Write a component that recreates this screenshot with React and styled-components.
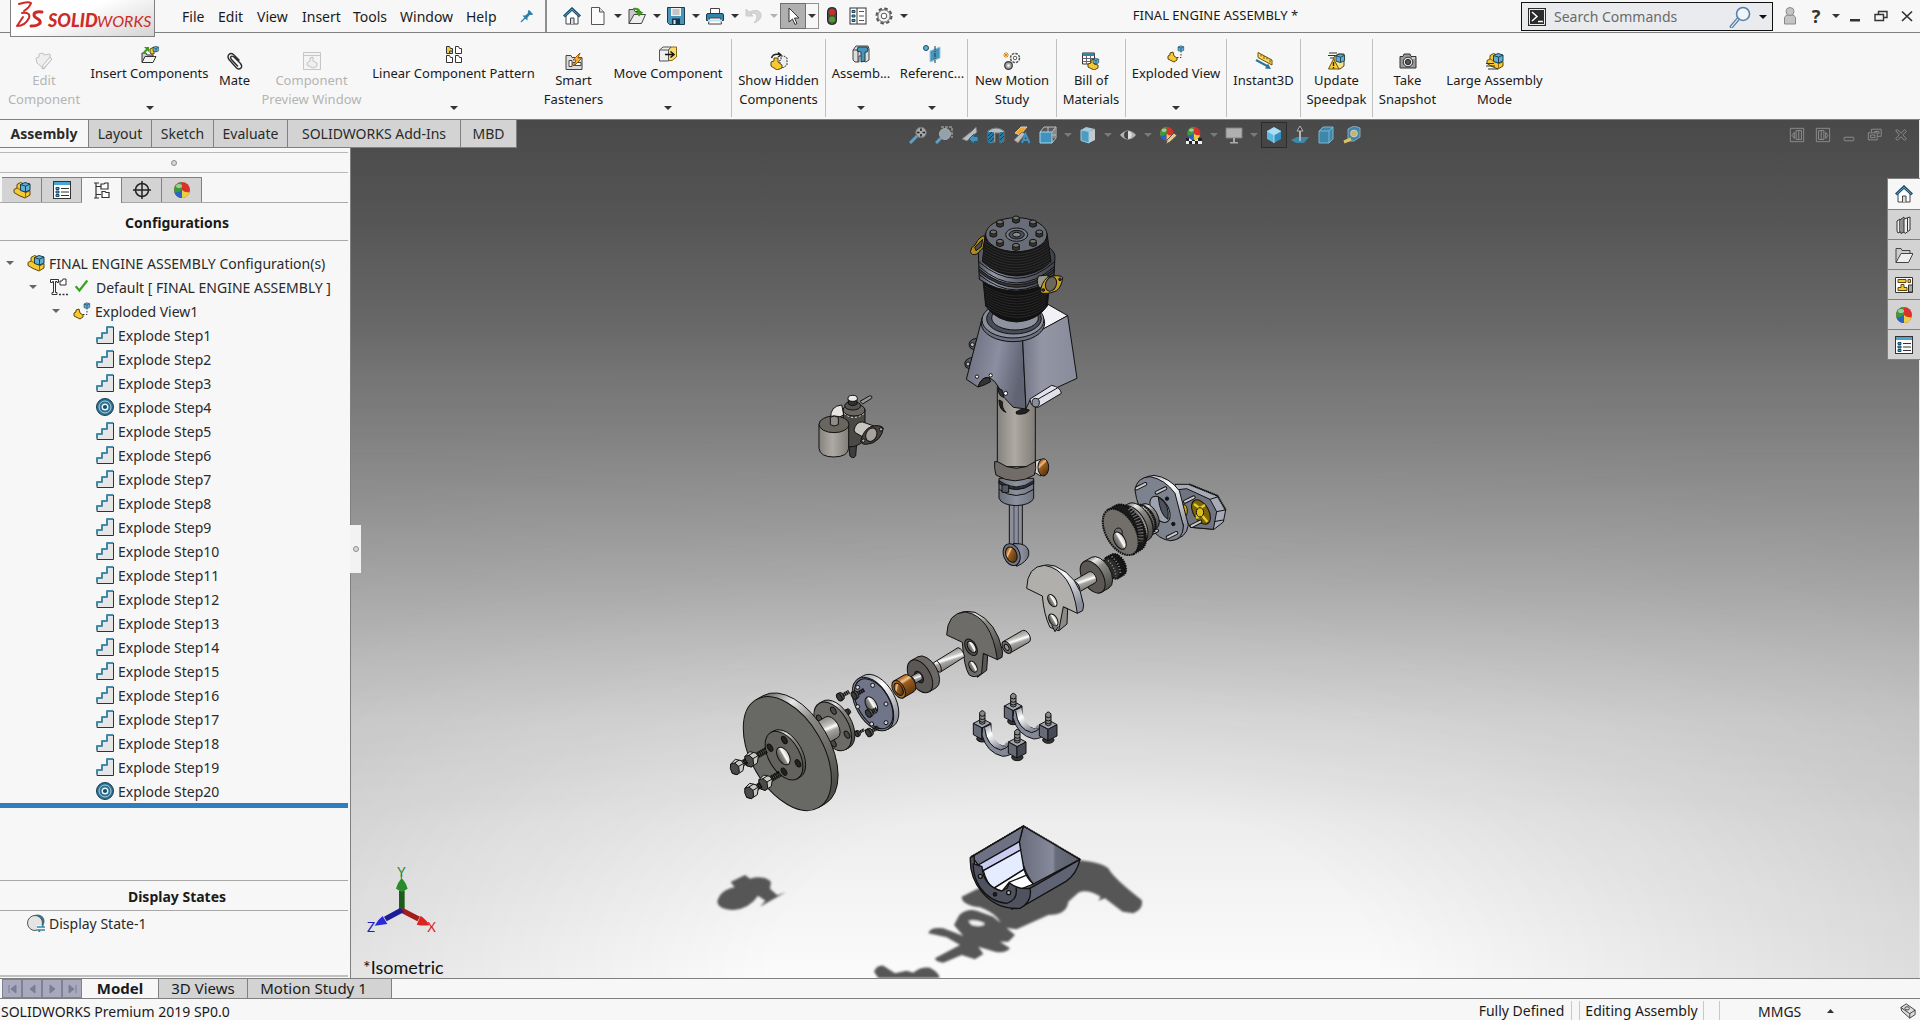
import { useState } from "react";
import styled, { createGlobalStyle, css } from "styled-components";

const GlobalStyle = createGlobalStyle`
  * {
    box-sizing: border-box;
  }
  body {
    margin: 0;
    background: #f7f7f7;
    color: #1a1a1a;
    font-family: "Segoe UI", "Noto Sans", "Open Sans", sans-serif;
    font-size: 14px;
    line-height: 19px;
  }
  button, input {
    font: inherit;
    color: inherit;
  }
  button {
    padding: 0;
    border: 0;
    background: transparent;
    cursor: pointer;
  }
`;

const flexCenter = css`
  display: flex;
  align-items: center;
  justify-content: center;
`;

const App = styled.div`
  min-height: 100vh;
  display: flex;
  flex-direction: column;
  overflow: hidden;
`;

/* ---------- title bar ---------- */

const TitleBar = styled.header`
  height: 33px;
  display: flex;
  align-items: stretch;
  border-bottom: 1px solid #808080;
`;

const Logo = styled.div`
  width: 145px;
  height: 37px;
  margin: 0 16px 0 10px;
  flex-shrink: 0;
  position: relative;
  border: 1px solid #808080;
  border-top: 0;
  background: linear-gradient(160deg, #fff 40%, #d4d4d4);
`;

const Menu = styled.nav`
  display: flex;
  align-items: center;
  padding-right: 5px;
  border-right: 2px solid #909090;
`;

const MenuItem = styled.button`
  width: ${(props) => props.$w}px;
  height: 28px;
  padding-left: 11px;
  text-align: left;
`;

const QuickBar = styled.div`
  display: flex;
  align-items: center;
  padding-left: 12px;
`;

const QuickButton = styled.button`
  ${flexCenter}
  width: ${(props) => props.$w || 26}px;
  height: 26px;
  opacity: ${(props) => (props.disabled ? 0.35 : 1)};
  ${(props) =>
    props.$pressed &&
    css`
      background: #b0b0b0;
      border: 1px solid #707070;
    `}
  ${(props) =>
    props.$boxed &&
    css`
      border: 1px solid #909090;
      border-left: 0;
    `}
`;

const HelpMark = styled.b`
  font-size: 18px;
  color: #333;
`;

const DocTitle = styled.div`
  flex: 1;
  ${flexCenter}
  padding-bottom: 2px;
  font-size: 13px;
`;

const Search = styled.label`
  width: 252px;
  height: 29px;
  margin-top: 2px;
  display: flex;
  align-items: center;
  gap: 8px;
  padding: 0 5px 0 6px;
  border: 1px solid #111;
  background: #e9ebee;
`;

const SearchInput = styled.input`
  flex: 1;
  min-width: 0;
  border: 0;
  padding: 0;
  background: transparent;
  outline: none;
  &::placeholder {
    color: #6a6a6a;
    opacity: 1;
  }
`;

const WindowButtons = styled.div`
  display: flex;
  align-items: center;
  padding-left: 4px;
`;

/* ---------- ribbon ---------- */

const Ribbon = styled.div`
  height: 87px;
  display: flex;
  padding-top: 6px;
  border-bottom: 1px solid #808080;
`;

const Command = styled.button`
  width: ${(props) => props.$w}px;
  height: 78px;
  flex-shrink: 0;
  display: flex;
  flex-direction: column;
  align-items: center;
  padding-top: ${(props) => (props.$menu ? 6 : 13)}px;
  border-right: 1px solid ${(props) => (props.$divider ? "#c0c0c0" : "transparent")};
  color: ${(props) => (props.disabled ? "#b4b4b4" : "#1a1a1a")};
  font-size: 13px;
  white-space: nowrap;
  svg {
    flex-shrink: 0;
    filter: ${(props) => (props.disabled ? "grayscale(1) opacity(0.3)" : "none")};
  }
`;

const CommandText = styled.span`
  margin-top: 1px;
  white-space: pre;
`;

const CommandArrow = styled.span`
  margin-top: 20px;
  line-height: 4px;
`;

/* ---------- workspace ---------- */

const Workspace = styled.main`
  flex: 1;
  display: grid;
  grid-template-columns: 351px 1fr;
  grid-template-rows: 28px 1fr;
`;

const Tabs = styled.div`
  grid-area: 1 / 1 / 2 / 3;
  z-index: 1;
  display: flex;
  justify-self: start;
`;

const Tab = styled.button`
  width: ${(props) => props.$w}px;
  border-right: 1px solid #808080;
  border-bottom: 1px solid #808080;
  background: ${(props) => (props.$active ? "#f7f7f7" : "#d3d3d3")};
  font-weight: ${(props) => (props.$active ? 700 : 400)};
  color: #2a2a2a;
`;

const Panel = styled.aside`
  grid-area: 2 / 1 / 3 / 2;
  display: flex;
  flex-direction: column;
  padding: 4px 2px 0 0;
  border-right: 1px solid #808080;
`;

const PanelGrip = styled.div`
  ${flexCenter}
  height: 21px;
  border: 1px solid #b8b8b8;
  border-width: 1px 0;
`;

const GripDot = styled.span`
  width: 6px;
  height: 6px;
  border: 1px solid #8c8c8c;
  border-radius: 50%;
  background: #d8d8d8;
`;

const PanelTabs = styled.div`
  height: 30px;
  display: flex;
  padding: 4px 0 0 2px;
  border-bottom: 1px solid #a8a8a8;
`;

const PanelTab = styled.button`
  ${flexCenter}
  width: 40px;
  height: ${(props) => (props.$active ? 26 : 25)}px;
  border-top: 1px solid #808080;
  border-right: 1px solid #808080;
  background: ${(props) => (props.$active ? "#f7f7f7" : "#d3d3d3")};
`;

const PanelHeading = styled.h2`
  ${flexCenter}
  height: ${(props) => props.$h}px;
  margin: 0;
  padding: 2px 0 0 6px;
  border-bottom: 1px solid #a8a8a8;
  font-size: 14px;
`;

const Tree = styled.ul`
  margin: 0;
  padding: 10px 0 0;
  list-style: none;
  border-bottom: 5px solid #2f7fbf;
`;

const TreeRow = styled.li`
  height: 24px;
  display: flex;
  align-items: center;
  padding-left: ${(props) => props.$level * 23}px;
  white-space: nowrap;
  color: #2a2a2a;
`;

const TreeArrow = styled.span`
  ${flexCenter}
  width: 20px;
  margin-right: 7px;
`;

const TreeText = styled.span`
  margin-left: ${(props) => props.$gap || 4}px;
`;

const Spacer = styled.div`
  flex: 1;
`;

const DisplayStates = styled.section`
  height: 98px;
  border-top: 1px solid #a8a8a8;
`;

const DisplayRow = styled.div`
  height: 66px;
  display: flex;
  align-items: flex-start;
  padding: 3px 0 0 27px;
  border-bottom: 2px solid #c0c0c0;
  color: #2a2a2a;
`;

const Viewport = styled.section`
  grid-area: 1 / 2 / 3 / 3;
  position: relative;
  border-right: 1px solid #e8e8e8;
  background: linear-gradient(
    #494949 0%,
    #565656 12%,
    #686868 24%,
    #7e7e7e 34%,
    #979797 44%,
    #b1b1b1 54%,
    #c8c8c8 62%,
    #dcdcdc 70%,
    #ededed 82%,
    #fbfbfb 100%
  );
  &::before {
    content: "";
    position: absolute;
    inset: 0;
    background: radial-gradient(ellipse 64% 70% at 46% 100%, transparent 30%, rgba(0, 0, 0, 0.17) 110%);
    mask-image: linear-gradient(transparent 30%, #000 80%);
  }
`;

const Scene = styled.svg`
  position: absolute;
  inset: 0;
  width: 100%;
  height: 100%;
`;

const ViewBar = styled.div`
  position: absolute;
  top: 2px;
  left: 0;
  right: 0;
  display: flex;
  justify-content: center;
`;

const ViewButton = styled.button`
  ${flexCenter}
  width: ${(props) => props.$w || 26}px;
  height: 26px;
  ${(props) =>
    props.$active &&
    css`
      border: 1px solid #2c2c2c;
      background: #454545;
    `}
`;

const ViewWindowBar = styled.div`
  position: absolute;
  top: 2px;
  right: 5px;
  display: flex;
`;

const TaskPane = styled.div`
  position: absolute;
  top: 58px;
  right: -1px;
  width: 33px;
  border: 1px solid #808080;
  border-right: 0;
`;

const TaskTab = styled.button`
  ${flexCenter}
  width: 32px;
  height: 30px;
  background: ${(props) => (props.$active ? "#f7f7f7" : "#d3d3d3")};
  & + & {
    border-top: 1px solid #808080;
  }
`;

const Splitter = styled.button`
  ${flexCenter}
  position: absolute;
  top: 405px;
  left: -1px;
  width: 11px;
  height: 48px;
  background: #f2f2f2;
`;

const ViewName = styled.div`
  position: absolute;
  left: 12px;
  bottom: 0;
  font-family: Lato, sans-serif;
  font-size: 18px;
  line-height: 22px;
  color: #111;
`;

/* ---------- bottom ---------- */

const SheetBar = styled.div`
  height: 21px;
  display: flex;
  padding-left: 2px;
  border-top: 1px solid #808080;
  border-bottom: 1px solid #808080;
`;

const SheetArrow = styled.button`
  ${flexCenter}
  width: 20px;
  border: 1px solid #80809a;
  background: #a9a9bd;
`;

const SheetTab = styled.button`
  width: ${(props) => props.$w}px;
  padding-right: ${(props) => props.$pad || 0}px;
  border-right: 1px solid #808080;
  background: ${(props) => (props.$active ? "#f7f7f7" : "#d3d3d3")};
  font-size: 15px;
  font-weight: ${(props) => (props.$active ? 700 : 400)};
`;

const StatusBar = styled.footer`
  height: 21px;
  display: flex;
  align-items: center;
  padding: 3px 4px 0 1px;
  overflow: hidden;
`;

const StatusCell = styled.span`
  width: ${(props) => props.$w}px;
  height: 21px;
  text-align: center;
  border-right: 1px solid #c8c8c8;
`;

const UnitButton = styled.button`
  width: 180px;
  display: flex;
  align-items: center;
  padding-left: 38px;
  gap: 26px;
`;

/* ---------- icons ---------- */

const Icon = ({ size = 18, children }) => (
  <svg width={size} height={size} viewBox="0 0 18 18" aria-hidden="true">
    {children}
  </svg>
);

const Caret = ({ color = "#333", up }) => (
  <svg width="8" height="4" viewBox="0 0 8 4" aria-hidden="true">
    <path d={up ? "M0 4h7l-3.500-4z" : "M0 0h8l-4 4z"} fill={color} />
  </svg>
);

const Cube = ({ x = 0, y = 0, s = 1 }) => (
  <g transform={`translate(${x} ${y}) scale(${s})`} stroke="#1c3d4f" strokeLinejoin="round">
    <path d="M0 2.500 4.500.5 9.500 2 9.500 8 5 10 0 8.500z" fill="#5fb0d8" />
    <path d="M0 2.500 5 4.200 9.500 2M5 4.200V10" fill="none" />
  </g>
);

const assembly = (
  <>
    <path
      d="M1 8.500 4 7V3.500L7.500 1.500 10 2.500 8 9 13 11.500 17 9.500V14L12 17 6 14.500 1 11.500z"
      fill="#f6c92f"
      stroke="#5b4510"
      strokeLinejoin="round"
    />
    <path d="M4 7 8 9M12.500 12V17" stroke="#8a6810" fill="none" />
    <Cube x={7.5} y={1} />
  </>
);

const ballPaint = (
  <>
    <circle cx="9" cy="9" r="8" fill="#d8322a" />
    <path d="M9 9 9 1A8 8 0 0 0 1.500 11.500Q6 13 9 9z" fill="#3a9b3c" />
    <path d="M9 9Q5 12 1.500 11.500A8 8 0 0 0 9 17z" fill="#2864c8" />
    <path d="M9 9V17A8 8 0 0 0 16.500 11Q12 12 9 9z" fill="#e9d040" />
    <ellipse cx="6" cy="5" rx="3" ry="2" fill="#fff" opacity=".5" />
  </>
);

const listPaint = (
  <>
    <rect x=".5" y=".5" width="17" height="17" fill="#fff" stroke="#333" />
    <rect x="1" y="1" width="16" height="3" fill="#4fa3cf" />
    <path d="M3 6.500h3v2H3zM3 10h3v2H3zM3 13.500h3v2H3z" fill="#4fa3cf" stroke="#1c4a66" />
    <path d="M8 7.500h8M8 11h8M8 14.500h8" stroke="#333" />
  </>
);

const homePaint = (
  <>
    <path d="M3 8v9h12V8L9 3z" fill="#fff" stroke="#444" />
    <path d="M7.500 17v-6h3.500v6" fill="#ddd" stroke="#444" />
    <path d="M1 9.500 9 2 17 9.500" fill="none" stroke="#1c4a66" strokeWidth="3" />
    <path d="M1.500 9.200 9 2.200 16.500 9.200" fill="none" stroke="#57a8cf" />
  </>
);

const explodedPaint = (
  <>
    <path d="M1 11 3 10V8L6 7 7 11 10 13V15L7 17 1 14z" fill="#f6c92f" stroke="#5b4510" strokeLinejoin="round" />
    <path d="M10 12.500h4V7" fill="none" stroke="#333" strokeDasharray="1.500 1.500" />
    <Cube x={11} y={0.5} s={0.6} />
  </>
);

const icons = {
  assembly,
  list: listPaint,
  home: homePaint,
  exploded: explodedPaint,
  ball: ballPaint,
  pin: <path d="M11 2 16 7 14 8 12 8 9.500 11 9.500 14 7 12 3 16 2 16 2 15 6 11 4 8.500 7 8.500 10 6 10 4z" fill="#2d7fa8" />,
  doc: (
    <>
      <path d="M2.500 .5h8l4.500 4.500v12.500h-12.500z" fill="#fbfbfb" stroke="#555" />
      <path d="M10.500 .5v4.500h4.500" fill="#ddd" stroke="#555" />
    </>
  ),
  open: (
    <>
      <path d="M1 16.500V2.500h5l1 2h6v3" fill="#c9c9c9" stroke="#444" />
      <path d="M1 16.500 6 7.500h11.500l-4 9z" fill="#eee" stroke="#444" />
      <path d="M5 1Q12 0 12.500 5h3L11 9.500 7.500 5H10Q9 2 5 3z" fill="#3f9b1f" />
    </>
  ),
  save: (
    <>
      <path d="M.5 .5h17v17H2.500l-2-2z" fill="#4a94ba" stroke="#1c3d4f" />
      <path d="M4 1h10v8H4z" fill="#f2f2f2" />
      <path d="M5.500 3h7M5.500 5h7M5.500 7h7" stroke="#999" />
      <path d="M5 11.500h8v6H5z" fill="#173648" />
      <path d="M6.500 13h2v4h-2z" fill="#dce9f0" />
    </>
  ),
  print: (
    <>
      <path d="M4.500 7V1.500h9V7" fill="#fff" stroke="#444" />
      <path d="M.5 8Q.5 6.500 2 6.500h14q1.500 0 1.500 1.500v5.500H.5z" fill="#2f86ad" stroke="#1c3d4f" />
      <path d="M3.500 11h11l1 6H2.500z" fill="#fff" stroke="#444" />
      <path d="M2 13.500h14" stroke="#bfe0ef" strokeWidth="2" />
    </>
  ),
  undo: <path d="M1 2v7h7L5.500 6.500Q12 5 12 10 12 13 9 16 17 13 16 7 14 1 4 5z" fill="#999" stroke="#777" />,
  cursor: <path d="M5 1v14l3.500-3 2.500 5.500 2-1-2.500-5.500h4.500z" fill="#fff" stroke="#333" />,
  traffic: (
    <>
      <rect x="4.500" y=".5" width="9" height="17" rx="4" fill="#4a4a4a" stroke="#222" />
      <circle cx="9" cy="5" r="3" fill="#d42b20" />
      <circle cx="9" cy="12.500" r="3" fill="#4f9d2b" />
    </>
  ),
  options: (
    <>
      <rect x="1" y="1" width="16" height="16" fill="#fff" stroke="#333" />
      <path d="M8 1v16" stroke="#333" />
      <path d="M3 3.500h3v2H3zM3 8h3v2H3zM3 12.500h3v2H3z" fill="#4fa3cf" stroke="#1c4a66" />
      <path d="M10 4.500h5M10 9h5M10 13.500h5" stroke="#555" />
    </>
  ),
  gear: (
    <g fill="none" stroke="#555">
      <circle cx="9" cy="9" r="7.500" strokeDasharray="3.500 2.400" strokeWidth="2" />
      <circle cx="9" cy="9" r="6.200" fill="#f3f3f3" />
      <circle cx="9" cy="9" r="2.800" fill="#fff" />
    </g>
  ),
  prompt: (
    <>
      <path d="M0 0h18v18H0z" fill="#2b2b2b" />
      <path d="M1.500 1.500h15v15h-15z" fill="none" stroke="#eee" />
      <path d="M4 4 9 8.500 4 13M10 13.500h5" fill="none" stroke="#fff" strokeWidth="1.500" />
    </>
  ),
  magnifier: (
    <>
      <path d="M2 17 8 10" stroke="#5b80a8" strokeWidth="3" strokeLinecap="round" />
      <path d="M2 17 8 10" stroke="#dfe8f2" strokeWidth="1" strokeLinecap="round" />
      <circle cx="11.500" cy="6.500" r="5.300" fill="#eef6fb" stroke="#5b80a8" strokeWidth="1.300" />
    </>
  ),
  user: (
    <g fill="#c4c4c4" stroke="#8a8a8a">
      <path d="M3.500 17V11q0-3 5.500-3t5.500 3v6z" />
      <circle cx="9" cy="4.500" r="4" />
    </g>
  ),
  minimize: <path d="M4 12h10v2.500H4z" fill="#333" />,
  restore: (
    <g fill="none" stroke="#333" strokeWidth="1.400">
      <path d="M3 7.500h8.500v6H3z" />
      <path d="M6.500 7V4.500H15v6h-3" />
    </g>
  ),
  close: <path d="M4 4.500 14 14M14 4.500 4 14" stroke="#333" strokeWidth="1.700" />,
  insert: (
    <>
      <path d="M1 17V8h4l1 2h6v7z" fill="#ccc" stroke="#333" />
      <path d="M1 17.500 4 11.500h11l-3 6z" fill="#f2f2f2" stroke="#333" />
      <path d="M2 7 5 4 3 2H8V7L6.500 5.500 3.500 8.500z" fill="#3a9b1f" />
      <path d="M9 7 9 4 13 2V9L10 9z" fill="#f6c92f" stroke="#5b4510" />
      <Cube x={12} y={1} s={0.6} />
    </>
  ),
  clip: (
    <path
      d="M13.500 8.500 7.500 2.500Q5 .5 3 2.500 1 4.500 3 7.500L10.500 16Q13 18 15 16 16.500 14 14.500 11.500L8 5Q6 3.500 5 4.500 4 5.500 5.500 7.500L12 14.500"
      fill="none"
      stroke="#2b2b2b"
      strokeWidth="1.400"
    />
  ),
  preview: (
    <>
      <path d="M.5 .5h17v17H.5z" fill="#eee" stroke="#555" />
      <path d="M.5 3.500h17" stroke="#555" />
      <path d="M4 11 7 9V6L10 5V9L14 11V14L10 16 4 13z" fill="#ddd" stroke="#444" />
    </>
  ),
  edit: (
    <>
      <path d="M1 6 4 5 4 2 8 1 9 3 15 2V9L9 17 2 11z" fill="#ddd" stroke="#444" />
      <path d="M7 17 8 13 15 5 17 7 10 15z" fill="#eee" stroke="#333" />
    </>
  ),
  pattern: (
    <>
      <path d="M1.500 1.500h3l1 2h2v5h-6z" fill="#f9cf3f" stroke="#333" />
      <path d="M10.500 1.500h3l1 2h2v5h-6zM1.500 10.500h3l1 2h2v5h-6zM10.500 10.500h3l1 2h2v5h-6z" fill="#fff" stroke="#333" />
      <path d="M4.500 8.500V6h3" fill="#5fb0d8" stroke="#1c4a66" />
    </>
  ),
  fasteners: (
    <>
      <path d="M1 17.500V3.500h5l1 2h10v12z" fill="#ddd" stroke="#444" />
      <path d="M4 8.500h3v6H4zM8 10.500h8v3H8z" fill="#fff" stroke="#444" />
      <path d="M15 1 8 8h3l-2 6 8-8h-4z" fill="#f9b52f" stroke="#a05a10" />
    </>
  ),
  move: (
    <>
      <path d="M9 5 12 2h5.500v10L13 15.500H9z" fill="#f9dc6f" stroke="#8a6810" />
      <path d="M.5 5 4 2h8L9.500 5v11H.500z" fill="#eee" stroke="#555" />
      <path d="M.500 5h9" stroke="#555" />
      <path d="M6 9.500h8M11.500 6.500 15 9.500 11.500 12.500" fill="none" stroke="#111" strokeWidth="1.500" />
    </>
  ),
  hidden: (
    <>
      <path d="M9 9 11 8V4L14 4 17 6V13L13 16z" fill="#eee" stroke="#333" strokeDasharray="2 1" />
      <path d="M1 10 4 9V6L8 6V10L12 13V16L7 18 1 14z" fill="#f6c92f" stroke="#5b4510" />
      <path d="M1.500 6Q3 1 10 2.500M8 .500 11 3 8 5" fill="none" stroke="#222" strokeWidth="1.500" />
    </>
  ),
  features: (
    <>
      <path d="M1 5 4 1h12l1 3v11l-3 2-3-1v-5H7v6H3l-2-2z" fill="#ddd" stroke="#444" />
      <path d="M1 5h5v12" fill="none" stroke="#444" />
      <path d="M6 2h9l1 3-1 2h-2v9l-4 1V7L5 6z" fill="#4795bb" stroke="#1c3d4f" />
    </>
  ),
  geometry: (
    <>
      <circle cx="3" cy="3" r="2.500" fill="#5fb0d8" stroke="#1c4a66" />
      <path d="M7 6 17 2V13L7 17z" fill="#4795bb" stroke="#9ccbe2" />
      <path d="M12 1v17" stroke="#173648" strokeDasharray="4 1 1 1" />
    </>
  ),
  motion: (
    <>
      <circle cx="12" cy="6" r="4.500" fill="#fff" stroke="#555" strokeWidth="1.500" strokeDasharray="2.500 1" />
      <circle cx="5.500" cy="13.500" r="3.800" fill="#aaa" stroke="#444" strokeWidth="1.400" />
      <circle cx="5.500" cy="13.500" r="1.200" fill="#fff" />
      <circle cx="12" cy="6" r="1.800" fill="#fff" stroke="#555" />
      <path d="M3 0v6M0 3h6M1 1l4 4M5 1 1 5" stroke="#e08a20" />
    </>
  ),
  bom: (
    <>
      <path d="M.5 1h12v11H.500z" fill="#fff" stroke="#333" />
      <path d="M.500 1h12v3H.500z" fill="#2f86ad" />
      <path d="M.500 6.500h12M.500 9.500h12M4.500 4v8M8.500 4v8" stroke="#666" />
      <path d="M6 12 9 11V8L12 7V12L16 13V16L12 18 6 15z" fill="#f6c92f" stroke="#5b4510" />
      <Cube x={11} y={6} s={0.6} />
    </>
  ),
  instant: (
    <>
      <path d="M3 .500 17 8V13L3 5.500z" fill="#fbd956" stroke="#6a5010" />
      <path d="M6 2.500v2M9 4v3M12 5.500v2M15 7.500v3" stroke="#6a5010" />
      <path d="M1 8 13 14.500" stroke="#2f7396" strokeWidth="2" />
      <path d="M16 17 10 16.500 13 11.500z" fill="#2f7396" />
    </>
  ),
  speedpak: (
    <>
      <path d="M1 1h8M0 3.500h8M2 6h6" stroke="#333" />
      <path d="M6 5 10 2H16V14L12 17 6 16z" fill="#f6e08f" stroke="#5b4510" />
      <Cube x={8} y={1.5} s={0.9} />
      <path d="M5.500 7 11 17H.500z" fill="#fbd02f" stroke="#6a5010" />
      <path d="M5.500 10v4M5.500 15v1.500" stroke="#222" strokeWidth="1.400" />
    </>
  ),
  camera: (
    <>
      <path d="M1 4.500h3l1-2.500h6l1 2.500h5v11.500H1z" fill="#9a9a9a" stroke="#333" />
      <circle cx="9" cy="10" r="4.800" fill="#ddd" stroke="#333" />
      <circle cx="9" cy="10" r="2.600" fill="#555" stroke="#222" />
      <path d="M13 6h3" stroke="#fff" />
    </>
  ),
  large: (
    <>
      {assembly}
      <path d="M0 11.500h8M0 14h9M2 17h10" stroke="#333" />
    </>
  ),
  config: (
    <g fill="#fff" stroke="#333" strokeWidth="1.200">
      <path d="M3 1v15M1 1h5M1 16h5M3 4.500h5M3 12.500h5" fill="none" />
      <path d="M8 2h3l1-1h3v6H8zM9 9.500h3l1 1h3v5H9z" />
    </g>
  ),
  target: (
    <g fill="none" stroke="#222" strokeWidth="1.500">
      <circle cx="9" cy="9" r="6.500" />
      <path d="M9 0v18M0 9h18" />
    </g>
  ),
  configTree: (
    <g stroke="#333" fill="#fff">
      <path d="M.500 1.500h8v3h-1.500v-1H5.500v11H7v2H2v-2h1.500v-11h-1v1h-2z" />
      <path d="M10 3h2l1-2h3v6h-6z" />
      <path d="M9 16.500h9" strokeWidth="1.600" strokeDasharray="2 1.500" />
    </g>
  ),
  check: <path d="M2 10 6.500 15 16 3" fill="none" stroke="#3aa023" strokeWidth="2.600" />,
  step: (
    <>
      <path d="M1 17.500V12h5V7h5V1h6.500v16.500z" fill="#e6e6e6" stroke="#333" />
      <path d="M1 16V12h5V7h5V1h6" fill="none" stroke="#2f86ad" strokeWidth="1.700" />
    </>
  ),
  radial: (
    <>
      <circle cx="9" cy="9" r="8.500" fill="#2d6f92" stroke="#1c3d4f" />
      <circle cx="9" cy="9" r="6" fill="none" stroke="#a9d3e6" />
      <circle cx="9" cy="9" r="2.800" fill="#1c4a66" stroke="#e8f4fa" strokeWidth="1.400" />
    </>
  ),
  display: (
    <>
      <circle cx="10.500" cy="7.500" r="7" fill="#2f7396" />
      <circle cx="8" cy="9" r="7.500" fill="#e4e4e4" stroke="#555" />
      <path d="M10 11h8v7h-8z" fill="#f7f7f7" />
      <path d="M10 13h7l-2-2M18 16h-7l2 2" stroke="#2f86ad" strokeWidth="1.500" fill="none" />
    </>
  ),
  library: (
    <g fill="#eee" stroke="#333">
      <path d="M2 5 5 3V16L3 17 2 15z" />
      <path d="M5 4 9 1V16L6 17.500 5 15z" />
      <path d="M9 3 15 1V14L10 17.500 9 16z" />
      <path d="M12.500 2v13M7 2.500V17" />
    </g>
  ),
  folder: (
    <>
      <path d="M1 16.500V2.500h5l1 2h8v3" fill="#ccc" stroke="#444" />
      <path d="M1 16.500 6 7.500h12l-4.500 9z" fill="#eee" stroke="#444" />
    </>
  ),
  palette: (
    <>
      <path d="M.500 1.500h17v15H.500z" fill="#fff" stroke="#333" />
      <path d="M3 3.500h8v3H3zM13 3.500h2.500v3H13zM3 14.500v-3h3v-3h3v3h3v3z" fill="#f6c92f" stroke="#5b4510" />
      <path d="M13.500 9h4v7h-4z" fill="#aaa" stroke="#333" />
    </>
  ),
  zoomFit: (
    <>
      <path d="M1 17 8 10" stroke="#5e9fc2" strokeWidth="3" />
      <circle cx="12" cy="6.500" r="5.200" fill="#aaa" stroke="#777" />
      <path d="M12 2.500v8M8 6.500h8" stroke="#222" strokeWidth="1.600" strokeDasharray="2.500 3" />
    </>
  ),
  zoomArea: (
    <>
      <path d="M6 1h11v11" fill="none" stroke="#bbb" strokeDasharray="3 1" />
      <path d="M1 17 6 12" stroke="#5e9fc2" strokeWidth="3" />
      <circle cx="10" cy="8" r="5.500" fill="#93a2aa" stroke="#aaa" />
    </>
  ),
  prevView: (
    <>
      <path d="M1 13 11 5 15 1 16 6 6 15z" fill="#b9bcbe" stroke="#777" />
      <path d="M17 10.500h-4V8l-5 5 5 5v-2.500h4z" fill="#4193bd" stroke="#2b5a73" />
    </>
  ),
  section: (
    <>
      <path d="M1 5Q9-1 17 5V15l-4 2V7H8V16L3 17 1 15z" fill="#b5bdc2" stroke="#777" />
      <path d="M1 6h6v10l-6 1zM13 6h4v9l-4 2z" fill="#2b7ba5" />
      <path d="M1 10 5 6M1 14 7 8M3 16 7 12M13 10 16 7M13 14 17 10" stroke="#163a4e" />
    </>
  ),
  annotate: (
    <>
      <path d="M2 7 8 1H14L7 9z" fill="#f0a52c" stroke="#ccc" />
      <path d="M1 14 9 6 12 8 5 17z" fill="#bbb" stroke="#777" />
      <path d="M9 17 12.500 8 16.500 17M10 14h5" stroke="#4193bd" strokeWidth="2" fill="none" />
    </>
  ),
  orient: (
    <>
      <path d="M1 6 5 1H17V12L13 17z" fill="#5a5a5a" stroke="#bbb" />
      <path d="M1 6h12v11H1z" fill="#4193bd" stroke="#a8d4e8" />
      <path d="M13 6 17 1M9 1v5M13 9h4M15 3v9" stroke="#bbb" />
    </>
  ),
  shaded: (
    <>
      <path d="M2 4 7 1 16 3 10 5.500z" fill="#a9c9d7" />
      <path d="M2 4 10 5.500V17L2 14.500z" fill="#4b9cc3" stroke="#9ccbe2" />
      <path d="M10 5.500 16 3V14L10 17z" fill="#c2cacd" />
    </>
  ),
  eye: (
    <>
      <path d="M1 9Q9 0 17 9 9 18 1 9z" fill="#b4b4b4" />
      <circle cx="9" cy="9" r="4" fill="#444" />
      <path d="M9 5v8a4 4 0 0 0 0-8z" fill="#ddd" />
    </>
  ),
  ballPencil: (
    <>
      <g transform="scale(.85)">{ballPaint}</g>
      <path d="M7 18 8 14 15 7 18 9.500 11 16z" fill="#e8c888" stroke="#555" />
    </>
  ),
  scene: (
    <>
      <path d="M1 12h16v6H1z" fill="#eee" />
      <path d="M1 12h3v3H1zM7 12h3v3H7zM13 12h4v3h-4zM4 15h3v3H4zM10 15h3v3h-3z" fill="#222" />
      <g transform="translate(1.500 0) scale(.82)">{ballPaint}</g>
    </>
  ),
  monitor: (
    <>
      <path d="M1 2h16v10H1z" fill="#b0b0b0" stroke="#808080" />
      <path d="M8 12h2v4h3v1.500H5V16h3z" fill="#aaa" />
    </>
  ),
  cube: (
    <>
      <path d="M2 5 9 1 16 5 9 9z" fill="#a6e0f7" />
      <path d="M2 5 9 9V17L2 13z" fill="#59b9e2" />
      <path d="M9 9 16 5V13L9 17z" fill="#3391bf" />
      <path d="M2 5 9 9 16 5M9 9V17" stroke="#d8f2fc" strokeWidth=".7" fill="none" />
    </>
  ),
  normal: (
    <>
      <path d="M0 14 6 11H18L13 17H5z" fill="#3d87ab" />
      <path d="M9 15V3" stroke="#b5b5b5" strokeWidth="2" />
      <path d="M6 5 9 0 12 5z" fill="#3a3a3a" stroke="#b5b5b5" />
    </>
  ),
  box: (
    <>
      <path d="M2 5 6 1H16V13L12 17H2z" fill="#3d87ab" stroke="#7fb4cd" />
      <path d="M2 5H12V17M12 5 16 1" fill="none" stroke="#7fb4cd" />
    </>
  ),
  tape: (
    <>
      <path d="M5 3 11 0 17 2V11L11 15H5z" fill="#3d87ab" stroke="#8fa6b2" />
      <circle cx="11" cy="7.500" r="3.400" fill="#c9b560" stroke="#ccc" />
      <path d="M1 16 8 13" stroke="#d9c468" strokeWidth="3" />
    </>
  ),
  dockLeft: <path d="M1.500 1.500h15v15h-15zM8 4h6v10H8zM6 6v7L3.500 9.500zM11 4v10" fill="none" stroke="#929292" />,
  dockRight: <path d="M1.500 1.500h15v15h-15zM4 4h6v10H4zM12 6v7l2.500-3.500zM7 4v10" fill="none" stroke="#929292" />,
  viewMin: <rect x="3.500" y="11.500" width="11" height="4" rx="1" fill="none" stroke="#929292" />,
  viewRestore: <path d="M1.500 6.500h10v8h-10zM4 9h5v3H4zM5 6V2.500h11v8h-4M8 5h5.500v3" fill="none" stroke="#929292" />,
  viewClose: <path d="M3 4 5 3 9 7 13 3 15 5 11 9 15 13 13 15 9 11 5 15 3 13 7 9z" fill="none" stroke="#929292" />,
  tag: (
    <g fill="#ddd" stroke="#333">
      <path d="M1 5 7 1 17 8V13L11 17 2 9z" />
      <path d="M1 5 11 12V17M11 12 17 8" fill="none" />
      <ellipse cx="8" cy="6" rx="2.500" ry="1.800" />
    </g>
  ),
};

const Pic = ({ name, size }) => <Icon size={size}>{icons[name]}</Icon>;

const LogoDrawing = () => (
  <svg width="143" height="36" viewBox="0 0 143 36" role="img" aria-label="SOLIDWORKS">
    <g fill="none" stroke="#cf2a27" strokeWidth="2" strokeLinecap="round" strokeLinejoin="round">
      <path d="M8 4Q17 1 20 3 19 7 13 11" />
      <path d="M11 13Q20 12 18 18 14 26 6 26L12 17" />
      <path d="M31 12Q23 11 23 15 23 17 27 19 31 22 28 24 26 26 20 26" strokeWidth="3" />
    </g>
    <g fill="#cf2a27" fontFamily="Lato, sans-serif" fontStyle="italic">
      <text x="37" y="27" fontWeight="900" fontSize="18">SOLID</text>
      <text x="86" y="27" fontSize="16">WORKS</text>
    </g>
  </svg>
);

/* ---------- model ---------- */

// Round part seen along the crank axis: a face at (x, y) pulled back by d.
const Disc = ({ x, y, r, d = 0, face = "#6b6a66", side = "url(#steelSide)", teeth }) => {
  const dx = 0.866 * d;
  const dy = -0.5 * d;
  const rim = `M${x - 0.5 * r} ${y - 0.866 * r}l${dx} ${dy}A${0.577 * r} ${r} -30 0 1 ${x + 0.5 * r + dx} ${
    y + 0.866 * r + dy
  }l${-dx} ${-dy}z`;
  return (
    <g>
      {d > 0 && <path d={rim} fill={side} />}
      {teeth && <path d={rim} fill="none" stroke="#111" strokeWidth="7" strokeDasharray="4 3" />}
      <ellipse
        cx={x}
        cy={y}
        rx={0.577 * r}
        ry={r}
        transform={`rotate(-30 ${x} ${y})`}
        fill={face}
        strokeDasharray={teeth ? "5 2" : undefined}
        strokeWidth={teeth ? 6 : undefined}
      />
    </g>
  );
};

const Screw = ({ x, y, len, r = 12 }) => (
  <g>
    <path d={`M${x} ${y}l${len * 0.866} ${-len * 0.5}`} stroke="#111" strokeWidth={r} strokeDasharray="5 1" />
    <path d={`M${x} ${y}l${len * 0.866} ${-len * 0.5}`} stroke="#777" strokeWidth="2" strokeDasharray="3 4" />
    <Disc x={x} y={y} r={r} d={r * 0.6} face="#3b3a38" side={r > 15 ? "#b5b4b0" : "#55534f"} />
  </g>
);

// Hexagon-headed bolt of the flywheel.
const HexBolt = ({ x, y, len }) => (
  <g>
    <path d={`M${x} ${y}l${len * 0.866} ${-len * 0.5}`} stroke="#111" strokeWidth="19" strokeDasharray="5 1" />
    <path d={`M${x} ${y}l${len * 0.866} ${-len * 0.5}`} stroke="#777" strokeWidth="2" strokeDasharray="3 4" />
    <path d={`M${x - 18} ${y - 8}l14-14 18 4 8 10-3 20-18 12-14-4z`} fill="#c9c8c4" />
    <path d={`M${x - 18} ${y - 8}l12-3 12 10 2 18-7 7-14-4-6-14z`} fill="#4c4b49" />
    <path d={`M${x + 6} ${y - 1}l15-9M${x - 6} ${y - 11}l14-9`} />
  </g>
);

const Block = ({ x, y }) => (
  <g>
    <ellipse cx={x} cy={y + 34} rx="17" ry="10" fill="#333" />
    <path d={`M${x - 27} ${y - 12}l27-14 26 14-26 14z`} fill="#a2a5b0" />
    <path d={`M${x - 27} ${y - 12}l26 14v34l-26-14z`} fill="#676b77" />
    <path d={`M${x + 26} ${y - 12}l-27 14v34l27-14z`} fill="#484b55" />
    <path d={`M${x - 8} ${y - 12}v-32q8-12 16 0v32q-8 6-16 0z`} fill="#8a8a88" />
    <path d={`M${x - 8} ${y - 36}q8 6 16 0m-16 10q8 6 16 0m-16 8q8 6 16 0`} fill="none" />
  </g>
);

const Cap = ({ x = 0, y = 0 }) => (
  <g transform={`translate(${x} ${y})`}>
    <Block x={787} y={382} />
    <path d="M786 405Q800 458 848 469 872 468 880 455L868 433Q848 446 826 425 808 402 806 376L788 384z" fill="#858995" />
    <path d="M794 385 811 375Q815 415 842 436 860 442 870 433L860 428 868 420 856 430Q850 448 824 440 800 425 794 385z" fill="url(#paleSide)" stroke="none" />
    <path d="M794 385Q800 440 842 450 860 446 870 433" fill="none" />
    <Block x={892} y={438} />
  </g>
);

const finRows = [0, 1, 2, 3, 4, 5, 6, 7, 8];
const headBolts = [
  [648, 60], [600, 72], [699, 72], [580, 102], [718, 102], [600, 130], [699, 130], [648, 142],
];

const Gradients = () => (
  <defs>
    <linearGradient id="steelSide" x1="0" y1="0" x2=".6" y2="1">
      <stop offset="0" stopColor="#3c3b39" />
      <stop offset=".25" stopColor="#e9e8e6" />
      <stop offset=".45" stopColor="#8b8a87" />
      <stop offset="1" stopColor="#504e4b" />
    </linearGradient>
    <linearGradient id="shaft" x1=".3" y1="0" x2=".7" y2="1">
      <stop offset="0" stopColor="#777572" />
      <stop offset=".35" stopColor="#c2c0bd" />
      <stop offset=".45" stopColor="#ffffff" />
      <stop offset=".55" stopColor="#a5a3a0" />
      <stop offset="1" stopColor="#5d5b58" />
    </linearGradient>
    <linearGradient id="bore">
      <stop offset="0" stopColor="#55534f" />
      <stop offset=".45" stopColor="#8f8d89" />
      <stop offset=".6" stopColor="#fff" />
      <stop offset="1" stopColor="#c5c3bf" />
    </linearGradient>
    <linearGradient id="paleSide" x1="0" y1="0" x2=".6" y2="1">
      <stop offset="0" stopColor="#8e93a3" />
      <stop offset=".4" stopColor="#fff" />
      <stop offset="1" stopColor="#8a8d9a" />
    </linearGradient>
    <linearGradient id="copper" x1="0" y1="0" x2=".6" y2="1">
      <stop offset="0" stopColor="#4a2a08" />
      <stop offset=".3" stopColor="#c98038" />
      <stop offset=".4" stopColor="#f3c48d" />
      <stop offset=".5" stopColor="#9a5d20" />
      <stop offset="1" stopColor="#5b340c" />
    </linearGradient>
    <linearGradient id="liner">
      <stop offset="0" stopColor="#85827d" />
      <stop offset=".45" stopColor="#aeaaa3" />
      <stop offset="1" stopColor="#807c77" />
    </linearGradient>
    <linearGradient id="band">
      <stop offset="0" stopColor="#4d5059" />
      <stop offset=".2" stopColor="#9499a8" />
      <stop offset=".5" stopColor="#636773" />
      <stop offset="1" stopColor="#3e4149" />
    </linearGradient>
    <linearGradient id="piston">
      <stop offset="0" stopColor="#6a6e79" />
      <stop offset=".5" stopColor="#8d92a0" />
      <stop offset="1" stopColor="#70747f" />
    </linearGradient>
    <linearGradient id="caseLeft" x2="1" y2=".3">
      <stop offset="0" stopColor="#666a79" />
      <stop offset=".6" stopColor="#8b8ea0" />
      <stop offset="1" stopColor="#606473" />
    </linearGradient>
    <linearGradient id="caseRight">
      <stop offset="0" stopColor="#737686" />
      <stop offset=".35" stopColor="#9496a5" />
      <stop offset="1" stopColor="#888b9b" />
    </linearGradient>
    <linearGradient id="panBack">
      <stop offset="0" stopColor="#686b7b" />
      <stop offset=".55" stopColor="#878a9b" />
      <stop offset=".6" stopColor="#686b79" />
      <stop offset="1" stopColor="#5c5f6d" />
    </linearGradient>
    <filter id="soft">
      <feGaussianBlur stdDeviation="3" />
    </filter>
  </defs>
);

const Shadows = () => (
  <g transform="translate(700 800) scale(.33333)" fill="#565656" stroke="none" filter="url(#soft)">
    <path d="M52 305Q60 270 104 262L92 246 135 225 150 236Q190 225 213 245L210 266 232 286 258 276 180 320 196 302 174 287Q150 325 100 330 55 328 52 305z" />
    <path d="M785 290 830 268 1130 180Q1200 185 1225 205 1240 235 1325 300 1332 325 1300 340L1268 335 1215 295 1195 302 1202 290Q1160 265 1135 278L1105 305Q1100 345 1045 345L950 388 905 382Q900 345 840 322 785 315 785 290z" />
    <path d="M778 345Q800 325 830 332L880 350 945 405 925 425 900 425 930 445Q915 462 885 455L835 440 850 462 825 478 785 465 730 488Q705 485 705 475L780 435 740 412 685 400Q690 380 730 385L790 408 762 375z" />
    <path d="M522 515Q530 495 550 497L585 520 620 512 640 518Q660 500 690 503 720 520 718 534H535z" />
    <path d="M805 362Q835 358 855 372 845 382 815 375z" fill="#f3f3f3" />
  </g>
);

const Carburettor = () => (
  <g transform="translate(800 200) scale(.33333)" strokeWidth="3">
    <path d="M180 604 208 588Q218 586 215 595L188 612z" fill="#97948f" />
    <path d="M92 655Q90 618 125 615L132 645Q115 650 112 658z" fill="#e7e5e1" />
    <path d="M146 735 150 768Q158 778 167 768L170 730z" fill="#3f3e3b" />
    <path d="M130 628V735Q160 752 195 720V628z" fill="#4b4945" />
    <ellipse cx="162" cy="630" rx="33" ry="18" fill="#6a6762" />
    <path d="M132 640Q160 665 193 640" fill="none" stroke="#ddd" strokeDasharray="6 6" />
    <ellipse cx="158" cy="617" rx="24" ry="13" fill="#55534f" />
    <path d="M145 595V612Q158 622 171 612V595z" fill="#33322f" />
    <ellipse cx="158" cy="595" rx="14" ry="9" fill="#eceae7" />
    <path d="M162 690Q168 664 188 666L222 678 198 716 166 698z" fill="#c9c5bf" />
    <path d="M182 724Q190 690 212 680 240 672 250 684 248 702 236 716 220 732 204 732 186 736 182 724z" fill="#45443f" />
    <ellipse cx="214" cy="704" rx="16" ry="21" transform="rotate(25 214 704)" fill="#a5a29c" />
    <circle cx="243" cy="688" r="5" fill="#aaa" />
    <circle cx="190" cy="722" r="5" fill="#aaa" />
    <path d="M57 673V745Q60 771 102 771 144 770 146 745V673z" fill="url(#liner)" />
    <ellipse cx="102" cy="673" rx="45" ry="25" fill="#69655f" />
    <path d="M91 652V674Q102 682 115 674V652Q102 644 91 652z" fill="#8f8b85" />
  </g>
);

const Cylinder = () => (
  <g transform="translate(800 200) scale(.33333)" strokeWidth="3">
    <path d="M628 900V1045H667V900z" fill="#8b8f99" />
    <path d="M642 910V1035M655 910V1035" stroke="#444750" />
    <path d="M640 1030 662 1032Q690 1038 686 1066 680 1086 650 1099z" fill="url(#piston)" />
    <ellipse cx="635" cy="1064" rx="24" ry="34" transform="rotate(-22 635 1064)" fill="#70747f" />
    <ellipse cx="634" cy="1064" rx="16" ry="24" transform="rotate(-22 634 1064)" fill="url(#copper)" />

    <path d="M597 835V895Q605 915 648 917 692 915 701 895V835z" fill="url(#piston)" />
    <path d="M597 842Q648 880 701 842V850Q648 888 597 850z" fill="#2d3036" />
    <path d="M597 868Q648 905 701 868" fill="none" />
    <rect x="606" y="855" width="20" height="22" fill="#555963" />
    <path d="M700 785 722 778V828L700 815z" fill="#d7d5d0" />
    <ellipse cx="730" cy="802" rx="16" ry="26" fill="url(#copper)" />

    <path d="M592 560V800H706V560z" fill="url(#liner)" />
    <path d="M584 785Q582 805 588 825 645 860 703 825 710 805 706 785 650 825 592 785z" fill="#716c68" />
    <path d="M597 600Q597 630 618 637 605 625 607 605zM648 636Q670 622 688 630 680 645 650 642z" fill="#222" />

    <path d="M518 418 530 415 525 450 512 445Q500 428 518 418zM505 476 516 472 512 508 498 502Q488 485 505 476z" fill="#555963" />
    <circle cx="517" cy="434" r="6" fill="#bbb" />
    <circle cx="504" cy="492" r="6" fill="#bbb" />
    <path d="M735 308 803 347 668 422 560 360z" fill="#f2f2f6" />
    <path d="M548 348 499 538 534 561Q545 528 568 533 585 540 598 565L612 592 640 622 678 627 668 420Q600 425 548 348z" fill="url(#caseLeft)" />
    <path d="M668 420 803 347 831 535 690 600 678 627z" fill="url(#caseRight)" />
    <path d="M534 561Q545 528 568 533L572 545Q550 558 534 561zM594 565 606 570 612 592Q596 590 594 565z" fill="#333" />
    <circle cx="531" cy="530" r="5" fill="#fff" />
    <circle cx="572" cy="526" r="5" fill="#fff" />
    <circle cx="617" cy="580" r="6" fill="#fff" />
    <path d="M690 597 755 556Q782 562 784 580L714 622Q690 620 690 597z" fill="#dfe0ea" />
    <path d="M706 602 772 564" />
    <ellipse cx="707" cy="608" rx="11" ry="13" fill="#8b8e9d" />
    <ellipse cx="639" cy="370" rx="95" ry="55" fill="#6c7080" />
    <ellipse cx="639" cy="360" rx="93" ry="54" fill="#8a8e9c" />
    <ellipse cx="642" cy="356" rx="82" ry="46" fill="#4a4d58" />
    <ellipse cx="645" cy="354" rx="70" ry="36" fill="#8f929f" />

    <path d="M511 155Q513 140 525 135 540 105 556 108L548 150 530 162Q515 168 511 155z" fill="#b08a18" />
    <path d="M524 142 548 118 544 140 528 152z" fill="#4c4c4c" />

    <path d="M549 240 557 318Q590 364 650 366 712 362 742 318L750 240Q650 290 549 240z" fill="#121212" />
    {finRows.map((row) => (
      <path key={row} d={`M${553 + row} ${258 + row * 8}q97 60 ${190 - row * 2} 0`} fill="none" stroke="#333" strokeWidth="2" />
    ))}
    <path d="M535 160Q538 150 556 140L742 140Q762 150 765 168L762 235Q650 310 538 238z" fill="url(#band)" />
    <path d="M536 185Q650 285 764 185M537 200Q650 298 763 200M538 224Q650 316 762 224" fill="none" />
    <path d="M538 208Q650 300 762 208L762 216Q650 308 538 216z" fill="#33363d" />
    <path d="M556 100 547 185Q590 226 650 228 712 225 753 185L741 100z" fill="#171717" />
    {finRows.map((row) => (
      <path key={row} d={`M${555 - row} ${122 + row * 8}q95 66 ${188 + row * 2} 0`} fill="none" stroke="#383838" strokeWidth="2" />
    ))}
    <ellipse cx="649" cy="104" rx="92" ry="51" fill="#686d77" />
    <ellipse cx="650" cy="104" rx="33" ry="20" fill="#777c86" />
    <ellipse cx="650" cy="104" rx="23" ry="13" fill="#4d515b" />
    <ellipse cx="650" cy="104" rx="12" ry="7" fill="#858a94" />
    {headBolts.map(([x, y]) => (
      <g key={`${x}-${y}`}>
        <path d={`M${x - 10} ${y - 7}v13q10 7 20 0v-13z`} fill="#383735" />
        <ellipse cx={x} cy={y - 6} rx="10" ry="6" fill="#716f6b" />
      </g>
    ))}
    <path d="M716 228 745 225 735 272 716 260Q708 240 716 228z" fill="#999690" />
    <path d="M722 278Q722 250 742 232 775 222 788 232 786 258 770 272 740 285 722 278z" fill="#c2a01e" />
    <ellipse cx="753" cy="252" rx="16" ry="22" transform="rotate(20 753 252)" fill="#6c665c" />
    <circle cx="780" cy="238" r="4" fill="#333" />
    <circle cx="730" cy="270" r="4" fill="#333" />
  </g>
);

const CrankTrain = () => (
  <g transform="translate(800 440) scale(.33333)" strokeWidth="3">
    {/* pump housing */}
    <path d="M1125 133 1168 133 1252 167 1277 210 1270 246 1242 268 1172 262 1132 200z" fill="#a7abb8" />
    <path d="M1168 133 1252 167 1277 210" fill="none" strokeWidth="6" strokeDasharray="4 2" />
    <path d="M1128 150 1160 146 1230 178 1250 215 1240 268 1172 262 1140 215z" fill="#6f7480" />
    <path d="M1230 178 1255 170M1250 215 1275 210M1242 245 1270 240" />
    <Disc x={1203} y={216} r={40} face="#7d6606" />
    <path d="M1182 192 1200 205 1215 195M1188 235 1205 225 1222 245M1200 200 1190 230" fill="none" stroke="#e8cf28" strokeWidth="7" />
    <ellipse cx="1200" cy="217" rx="11" ry="14" fill="#d9bd18" />
    <ellipse cx="1152" cy="213" rx="10" ry="19" fill="#c9a812" />
    {/* gear case plate */}
    <path d="M1010 138Q1022 110 1062 106 1108 112 1138 152L1165 255Q1160 295 1112 302 1150 290 1150 255L1120 165Q1080 110 1010 138z" fill="url(#paleSide)" />
    <path d="M1005 150Q1010 112 1050 110 1095 118 1125 160L1150 258Q1150 300 1112 302 1078 300 1050 262 1010 200 1005 150z" fill="#7d838e" />
    <Disc x={1080} y={208} r={43} face="#9da4b0" />
    <path d="M1075 172Q1110 190 1104 238 1080 225 1075 172z" fill="#4d525c" />
    <circle cx="1101" cy="176" r="5" fill="#111" />
    <circle cx="1120" cy="252" r="5" fill="#111" />
    {[[1010, 145], [1070, 158], [1155, 185], [1175, 258], [1045, 285], [1103, 292]].map(([x, y]) => (
      <g key={x}>
        <path d={`M${x} ${y}l26-13`} strokeWidth="12" strokeLinecap="round" />
        <path d={`M${x} ${y}l26-13`} stroke="#c9c9c9" strokeWidth="6" strokeLinecap="round" />
      </g>
    ))}
    {/* timing gear */}
    <Disc x={1038} y={235} r={42} d={12} face="#d8d5cf" />
    <Disc x={1024} y={243} r={48} d={10} face="#b4ad58" teeth />
    <Disc x={1000} y={254} r={62} d={18} face="#95928d" />
    <Disc x={962} y={276} r={76} d={26} face="#726f6b" side="#1a1a1a" teeth />
    <path d="M990 204Q1028 250 1022 305" fill="none" stroke="#777" strokeWidth="16" strokeDasharray="3 6" />
    <ellipse cx="955" cy="278" rx="12" ry="14" fill="#726f6b" />
    <Disc x={959} y={302} r={28} face="url(#bore)" />
    {/* short shaft */}
    <Disc x={936} y={384} r={35} d={20} face="#2b2b2b" side="#161616" teeth />
    <path d="M935 350Q960 370 962 405M924 362Q945 380 948 410" stroke="#999" strokeWidth="5" strokeDasharray="3 6" fill="none" />
    <Disc x={878} y={411} r={53} d={26} face="#5a5754" side="url(#steelSide)" />
    <Disc x={826} y={441} r={19} d={58} face="#aaa" side="url(#shaft)" />
    {/* crank webs */}
    <path d="M692 402Q720 365 765 378 838 408 851 495L848 512 832 520 800 480z" fill="url(#paleSide)" />
    <path d="M788 500 803 506 801 552 777 572 765 566z" fill="#8b8a86" />
    <path d="M680 445Q682 378 734 376 815 390 832 520L790 500 776 572 750 562Q732 525 727 468z" fill="#b0afab" />
    <Disc x={757} y={482} r={20} face="url(#bore)" />
    <Disc x={760} y={540} r={20} face="url(#bore)" />
    <path d="M755 555 765 575 775 560" fill="#777" />
    <Disc x={620} y={622} r={20} d={66} face="#6b6966" side="url(#shaft)" />
    <Disc x={620} y={622} r={10} face="#9b9996" />
    <path d="M465 530Q480 508 525 517 590 545 608 635L606 652 592 659 560 600z" fill="url(#steelSide)" />
    <path d="M548 640 563 646 560 691 532 712z" fill="#5a5855" />
    <path d="M440 585Q442 518 496 516 574 528 592 659L550 640 545 700Q525 718 507 704 492 680 487 607z" fill="#6e6c68" />
    <Disc x={513} y={622} r={27} face="#55534f" />
    <Disc x={515} y={621} r={19} face="url(#bore)" />
    <Disc x={519} y={680} r={18} face="url(#bore)" />
    {/* long shaft, bearing, bush */}
    <path d="M401 668 474 623Q488 626 494 650L420 697Q402 692 401 668z" fill="url(#shaft)" />
    <path d="M412 664Q425 675 424 694" fill="none" />
    <Disc x={360} y={709} r={54} d={24} face="#5b5855" side="#6c6865" />
    <Disc x={357} y={711} r={19} face="#33312f" />
    <Disc x={336} y={722} r={12} d={26} face="#bbb" side="url(#shaft)" />
    <Disc x={296} y={748} r={29} d={36} face="#a8692a" side="url(#copper)" />
    <Disc x={296} y={748} r={20} face="url(#copper)" />
  </g>
);

const FlywheelGroup = () => (
  <g transform="translate(720 600) scale(.33333)" strokeWidth="3">
    <Disc x={459} y={312} r={88} d={18} face="#767b8c" side="url(#paleSide)" />
    <Disc x={461} y={311} r={82} face="#70758a" />
    {[[458, 256], [413, 262], [498, 312], [413, 320], [498, 368], [455, 372]].map(([x, y]) => (
      <circle key={`${x}-${y}`} cx={x} cy={y} r="6" fill="#d2d5df" />
    ))}
    <Disc x={454} y={315} r={27} face="url(#bore)" />
    <Screw x={358} y={292} len={34} />
    <Screw x={402} y={287} len={36} />
    <Screw x={445} y={341} len={30} />
    <Screw x={445} y={399} len={34} />
    <Screw x={410} y={402} len={26} r={9} />
    <Screw x={382} y={336} len={8} r={8} />
    <Disc x={338} y={379} r={80} d={12} face="#6d6b67" />
    {[[340, 332], [298, 356], [381, 404], [340, 430]].map(([x, y]) => (
      <Disc key={`${x}-${y}`} x={x} y={y} r={12} face="#4a4946" />
    ))}
    <Disc x={290} y={408} r={36} d={52} face="#777" side="url(#shaft)" />
    <Disc x={202} y={461} r={187} d={24} face="#686864" />
    <Disc x={192} y={467} r={80} d={10} face="#63625f" />
    {[[193, 420], [150, 443], [234, 490], [192, 515]].map(([x, y]) => (
      <Disc key={`${x}-${y}`} x={x} y={y} r={12} face="#222" />
    ))}
    <Disc x={190} y={468} r={29} face="url(#bore)" />
    <HexBolt x={93} y={477} len={54} />
    <HexBolt x={50} y={500} len={36} />
    <HexBolt x={135} y={547} len={54} />
    <HexBolt x={93} y={572} len={36} />
    <Cap x={93} y={-52} />
    <Cap />
  </g>
);

const OilPan = () => (
  <g transform="translate(700 800) scale(.33333)" strokeWidth="4">
    <path d="M970 78 1140 178 1000 252Q962 205 958 125z" fill="url(#panBack)" />
    <path d="M970 78 815 170 835 195 958 125z" fill="#6e7183" />
    <path d="M958 125 835 195 850 212 962 150z" fill="#c9ccf0" />
    <path d="M962 150 850 212Q860 250 880 266L972 208z" fill="#e6ecff" />
    <path d="M972 208 880 266 905 275 925 250 960 268 1000 252Q980 235 972 208z" fill="#fdfdff" />
    <path d="M925 248 978 226" />
    <path d="M990 265 1140 178Q1130 222 1098 244L970 318 935 327z" fill="#5f6373" />
    <path d="M990 265Q998 305 960 325 890 330 845 275 808 230 811 172L822 166 824 192 846 200Q850 258 905 273L922 264 928 248Q955 270 990 265z" fill="#50535f" />
    <path d="M948 262Q955 300 920 310 870 305 840 262 818 228 820 190" fill="none" />
    <path d="M815 170 970 78 1140 178" fill="none" strokeWidth="6" strokeDasharray="3 3" />
    <circle cx="841" cy="229" r="6" fill="#999" />
    <circle cx="885" cy="283" r="5" fill="#222" />
    <circle cx="926" cy="278" r="6" fill="#bbb" />
  </g>
);

const Triad = () => (
  <g transform="translate(0 760) scale(.33333)" stroke="none">
    <path d="M1197 452V392H1214V452z" fill="#1d5c1d" />
    <path d="M1188 386Q1194 366 1205 355 1217 366 1223 386L1206 396z" fill="#2b8a2b" />
    <path d="M1204 357V342" stroke="#2b8a2b" strokeWidth="3" />
    <path d="M1208 443 1260 470 1252 484 1200 457z" fill="#a31d1d" />
    <path d="M1262 467Q1282 482 1288 496 1268 498 1250 494z" fill="#d22" />
    <path d="M1200 444 1212 456 1160 484 1152 470z" fill="#1c1c98" />
    <path d="M1148 468Q1132 480 1124 497L1162 492z" fill="#2a2ad8" />
    <g fontFamily="Lato, sans-serif" fontSize="40" textAnchor="middle">
      <text x="1204" y="350" fill="#2b8a2b">Y</text>
      <text x="1295" y="515" fill="#d22">X</text>
      <text x="1113" y="515" fill="#1c1cc0">Z</text>
    </g>
  </g>
);

const Model = () => (
  <Scene viewBox="351 120 1568 858" preserveAspectRatio="xMidYMid meet">
    <Gradients />
    <Shadows />
    <g stroke="#111" strokeLinejoin="round">
      <Carburettor />
      <Cylinder />
      <CrankTrain />
      <FlywheelGroup />
      <OilPan />
    </g>
    <Triad />
  </Scene>
);

/* ---------- data ---------- */

const menuItems = [
  ["File", 36],
  ["Edit", 39],
  ["View", 45],
  ["Insert", 51],
  ["Tools", 47],
  ["Window", 66],
  ["Help", 59],
];

const quickItems = [
  { icon: "home", w: 26 },
  { icon: "doc", w: 26, arrow: true },
  { icon: "open", w: 26, arrow: true },
  { icon: "save", w: 26, arrow: true },
  { icon: "print", w: 26, arrow: true },
  { icon: "undo", w: 26, arrow: true, disabled: true },
];

const commands = [
  { text: "Edit\nComponent", icon: "edit", w: 89, disabled: true },
  { text: "Insert Components", icon: "insert", w: 122, menu: true },
  { text: "Mate", icon: "clip", w: 48 },
  { text: "Component\nPreview Window", icon: "preview", w: 106, disabled: true },
  { text: "Linear Component Pattern", icon: "pattern", w: 178, menu: true },
  { text: "Smart\nFasteners", icon: "fasteners", w: 62 },
  { text: "Move Component", icon: "move", w: 127, menu: true, divider: true },
  { text: "Show Hidden\nComponents", icon: "hidden", w: 94, divider: true },
  { text: "Assemb...", icon: "features", w: 71, menu: true },
  { text: "Referenc...", icon: "geometry", w: 71, menu: true, divider: true },
  { text: "New Motion\nStudy", icon: "motion", w: 89, divider: true },
  { text: "Bill of\nMaterials", icon: "bom", w: 69, divider: true },
  { text: "Exploded View", icon: "exploded", w: 101, menu: true, divider: true },
  { text: "Instant3D", icon: "instant", w: 74, divider: true },
  { text: "Update\nSpeedpak", icon: "speedpak", w: 72, divider: true },
  { text: "Take\nSnapshot", icon: "camera", w: 70 },
  { text: "Large Assembly\nMode", icon: "large", w: 104 },
];

const tabs = [
  ["Assembly", 89],
  ["Layout", 63],
  ["Sketch", 62],
  ["Evaluate", 74],
  ["SOLIDWORKS Add-Ins", 173],
  ["MBD", 56],
];

const viewItems = [
  "zoomFit", "zoomArea", "prevView", "section", "annotate", "orient", "|",
  "shaded", "|", "eye", "|", "ballPencil", "scene", "|", "monitor", "|",
  "cube", "normal", "box", "tape",
];

const sheets = [
  { name: "Model", w: 77 },
  { name: "3D Views", w: 89 },
  { name: "Motion Study 1", w: 144, pad: 12 },
];

const radialSteps = [4, 20];
const steps = Array.from({ length: 20 }, (_, i) => i + 1);

const sheetArrows = {
  First: "M3 2v8M10 2 5 6l5 4z",
  Previous: "M9 2 4 6l5 4z",
  Next: "M4 2l5 4-5 4z",
  Last: "M10 2v8M3 2l5 4-5 4z",
};

const SolidAssembly = () => {
  const [tab, setTab] = useState("Assembly");
  const [sheet, setSheet] = useState("Model");

  return (
    <App>
      <GlobalStyle />
      <TitleBar>
        <Logo>
          <LogoDrawing />
        </Logo>
        <Menu>
          {menuItems.map(([name, w]) => (
            <MenuItem key={name} $w={w}>{name}</MenuItem>
          ))}
          <QuickButton $w={26} aria-label="Pin menu">
            <Pic name="pin" size={16} />
          </QuickButton>
        </Menu>
        <QuickBar>
          {quickItems.map((item) => [
            <QuickButton key={item.icon} $w={item.w} disabled={item.disabled} aria-label={item.icon}>
              <Pic name={item.icon} />
            </QuickButton>,
            item.arrow && (
              <QuickButton key={`${item.icon}-menu`} $w={13} disabled={item.disabled} aria-label={`${item.icon} menu`}>
                <Caret />
              </QuickButton>
            ),
          ])}
          <QuickButton $w={26} $pressed aria-label="select"><Pic name="cursor" /></QuickButton>
          <QuickButton $w={13} $boxed aria-label="select menu"><Caret /></QuickButton>
          <QuickButton $w={26} aria-label="rebuild"><Pic name="traffic" /></QuickButton>
          <QuickButton $w={26} aria-label="properties"><Pic name="options" /></QuickButton>
          <QuickButton $w={26} aria-label="options"><Pic name="gear" /></QuickButton>
          <QuickButton $w={13} aria-label="options menu"><Caret /></QuickButton>
        </QuickBar>
        <DocTitle>FINAL ENGINE ASSEMBLY *</DocTitle>
        <Search>
          <Pic name="prompt" />
          <SearchInput placeholder="Search Commands" aria-label="Search Commands" />
          <Pic name="magnifier" size={22} />
          <Caret color="#111" />
        </Search>
        <WindowButtons>
          <QuickButton aria-label="Account"><Pic name="user" /></QuickButton>
          <QuickButton aria-label="Help"><HelpMark>?</HelpMark></QuickButton>
          <QuickButton $w={13} aria-label="Help menu"><Caret /></QuickButton>
          <QuickButton aria-label="Minimize"><Pic name="minimize" /></QuickButton>
          <QuickButton aria-label="Restore"><Pic name="restore" /></QuickButton>
          <QuickButton aria-label="Close"><Pic name="close" /></QuickButton>
        </WindowButtons>
      </TitleBar>

      <Ribbon>
        {commands.map((item) => (
          <Command key={item.text} $w={item.w} $menu={item.menu} $divider={item.divider} disabled={item.disabled}>
            <Pic name={item.icon} />
            <CommandText>{item.text}</CommandText>
            {item.menu && <CommandArrow><Caret /></CommandArrow>}
          </Command>
        ))}
      </Ribbon>

      <Workspace>
        <Tabs>
          {tabs.map(([name, w]) => (
            <Tab key={name} $w={w} $active={tab === name} onClick={() => setTab(name)}>{name}</Tab>
          ))}
        </Tabs>

        <Panel>
          <PanelGrip><GripDot /></PanelGrip>
          <PanelTabs>
            <PanelTab aria-label="Feature tree"><Pic name="assembly" /></PanelTab>
            <PanelTab aria-label="Properties"><Pic name="list" /></PanelTab>
            <PanelTab $active aria-label="Configurations"><Pic name="config" /></PanelTab>
            <PanelTab aria-label="Dimensions"><Pic name="target" /></PanelTab>
            <PanelTab aria-label="Display"><Pic name="ball" /></PanelTab>
          </PanelTabs>
          <PanelHeading $h={38}>Configurations</PanelHeading>
          <Tree>
            <TreeRow $level={0}>
              <TreeArrow><Caret color="#666" /></TreeArrow>
              <Pic name="assembly" />
              <TreeText>FINAL ENGINE ASSEMBLY Configuration(s)</TreeText>
            </TreeRow>
            <TreeRow $level={1}>
              <TreeArrow><Caret color="#666" /></TreeArrow>
              <Pic name="configTree" />
              <TreeText $gap={6}><Pic name="check" size={15} /></TreeText>
              <TreeText $gap={7}>Default [ FINAL ENGINE ASSEMBLY ]</TreeText>
            </TreeRow>
            <TreeRow $level={2}>
              <TreeArrow><Caret color="#666" /></TreeArrow>
              <Pic name="exploded" />
              <TreeText>Exploded View1</TreeText>
            </TreeRow>
            {steps.map((step) => (
              <TreeRow key={step} $level={3}>
                <TreeArrow />
                <Pic name={radialSteps.includes(step) ? "radial" : "step"} />
                <TreeText>Explode Step{step}</TreeText>
              </TreeRow>
            ))}
          </Tree>
          <Spacer />
          <DisplayStates>
            <PanelHeading $h={30}>Display States</PanelHeading>
            <DisplayRow>
              <Pic name="display" />
              <TreeText>Display State-1</TreeText>
            </DisplayRow>
          </DisplayStates>
        </Panel>

        <Viewport>
          <Model />
          <ViewBar>
            {viewItems.map((name, i) =>
              name === "|" ? (
                <ViewButton key={i} $w={14} aria-label="More"><Caret color="#7a7a7a" /></ViewButton>
              ) : (
                <ViewButton key={name} $active={name === "cube"} aria-label={name}><Pic name={name} /></ViewButton>
              )
            )}
          </ViewBar>
          <ViewWindowBar>
            {["dockLeft", "dockRight", "viewMin", "viewRestore", "viewClose"].map((name) => (
              <ViewButton key={name} aria-label={name}><Pic name={name} size={16} /></ViewButton>
            ))}
          </ViewWindowBar>
          <TaskPane>
            {["home", "library", "folder", "palette", "ball", "list"].map((name, i) => (
              <TaskTab key={name} $active={i === 0} aria-label={name}><Pic name={name} /></TaskTab>
            ))}
          </TaskPane>
          <Splitter aria-label="Collapse panel"><GripDot /></Splitter>
          <ViewName>*Isometric</ViewName>
        </Viewport>
      </Workspace>

      <SheetBar>
        {Object.entries(sheetArrows).map(([name, d]) => (
          <SheetArrow key={name} aria-label={name}>
            <svg width="13" height="12" viewBox="0 0 13 12"><path d={d} fill="#7c7c98" stroke="#7c7c98" /></svg>
          </SheetArrow>
        ))}
        {sheets.map(({ name, w, pad }) => (
          <SheetTab key={name} $w={w} $pad={pad} $active={sheet === name} onClick={() => setSheet(name)}>{name}</SheetTab>
        ))}
      </SheetBar>

      <StatusBar>
        <span>SOLIDWORKS Premium 2019 SP0.0</span>
        <Spacer />
        <StatusCell $w={100}>Fully Defined</StatusCell>
        <StatusCell $w={8} />
        <StatusCell $w={124}>Editing Assembly</StatusCell>
        <StatusCell $w={16} />
        <UnitButton>MMGS <Caret up /></UnitButton>
        <Pic name="tag" size={16} />
      </StatusBar>
    </App>
  );
};

export default SolidAssembly;
